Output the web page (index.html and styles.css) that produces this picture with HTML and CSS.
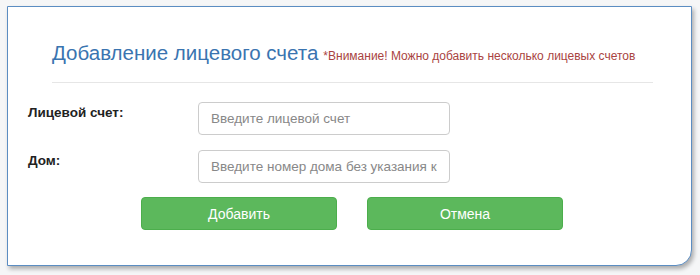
FILE: index.html
```html
<!DOCTYPE html>
<html lang="ru">
<head>
    <meta charset="UTF-8">
    <title>Добавление лицевого счета</title>
    <link rel="stylesheet" href="styles.css">
</head>
<body>
    <div class="panel">
        <div class="header">
            <h2>Добавление лицевого счета</h2>
            <span class="warning">*Внимание! Можно добавить несколько лицевых счетов</span>
        </div>
        <form class="account-form">
            <div class="form-row">
                <label>Лицевой счет:</label>
                <input type="text" placeholder="Введите лицевой счет">
            </div>
            <div class="form-row">
                <label>Дом:</label>
                <input type="text" placeholder="Введите номер дома без указания корпуса">
            </div>
            <div class="buttons">
                <button type="button" class="btn">Добавить</button>
                <button type="button" class="btn">Отмена</button>
            </div>
        </form>
    </div>
</body>
</html>
```

FILE: styles.css
```css
body {
    margin: 0;
    background: #f5f6f7;
    font-family: "Liberation Sans", Arial, sans-serif;
    color: #333;
}

.panel {
    margin: 6px 8px 9px 7px;
    height: 260px;
    box-sizing: border-box;
    background: #fff;
    border: 1px solid #5b8dc2;
    border-bottom-right-radius: 16px;
    box-shadow: 2px 3px 4px rgba(0, 0, 0, 0.3);
    padding: 0 38px 0 20px;
}

.header {
    margin: 0 0 0 24px;
    padding: 34px 0 17px;
    border-bottom: 1px solid #e6e6e6;
    display: flex;
    align-items: baseline;
    gap: 5px;
    white-space: nowrap;
}

.header h2 {
    margin: 0;
    font-size: 20.5px;
    font-weight: normal;
    color: #3a74b0;
}

.warning {
    font-size: 12px;
    color: #a94442;
}

.account-form {
    padding-top: 19px;
}

.form-row {
    display: flex;
    align-items: flex-start;
    margin-bottom: 15px;
}

.form-row label {
    width: 170px;
    font-size: 13.5px;
    font-weight: bold;
    color: #222;
    padding-top: 3px;
}

.form-row input {
    width: 252px;
    height: 33px;
    box-sizing: border-box;
    border: 1px solid #ccc;
    border-radius: 4px;
    padding: 0 12px;
    font-family: inherit;
    font-size: 13.5px;
    color: #555;
}

.form-row input::placeholder {
    color: #888;
}

.buttons {
    display: flex;
    gap: 30px;
    padding-left: 113px;
    margin-top: -1px;
}

.btn {
    width: 196px;
    height: 33px;
    background: #5cb85c;
    border: 1px solid #4cae4c;
    border-radius: 4px;
    color: #fff;
    font-family: inherit;
    font-size: 14px;
}
```
